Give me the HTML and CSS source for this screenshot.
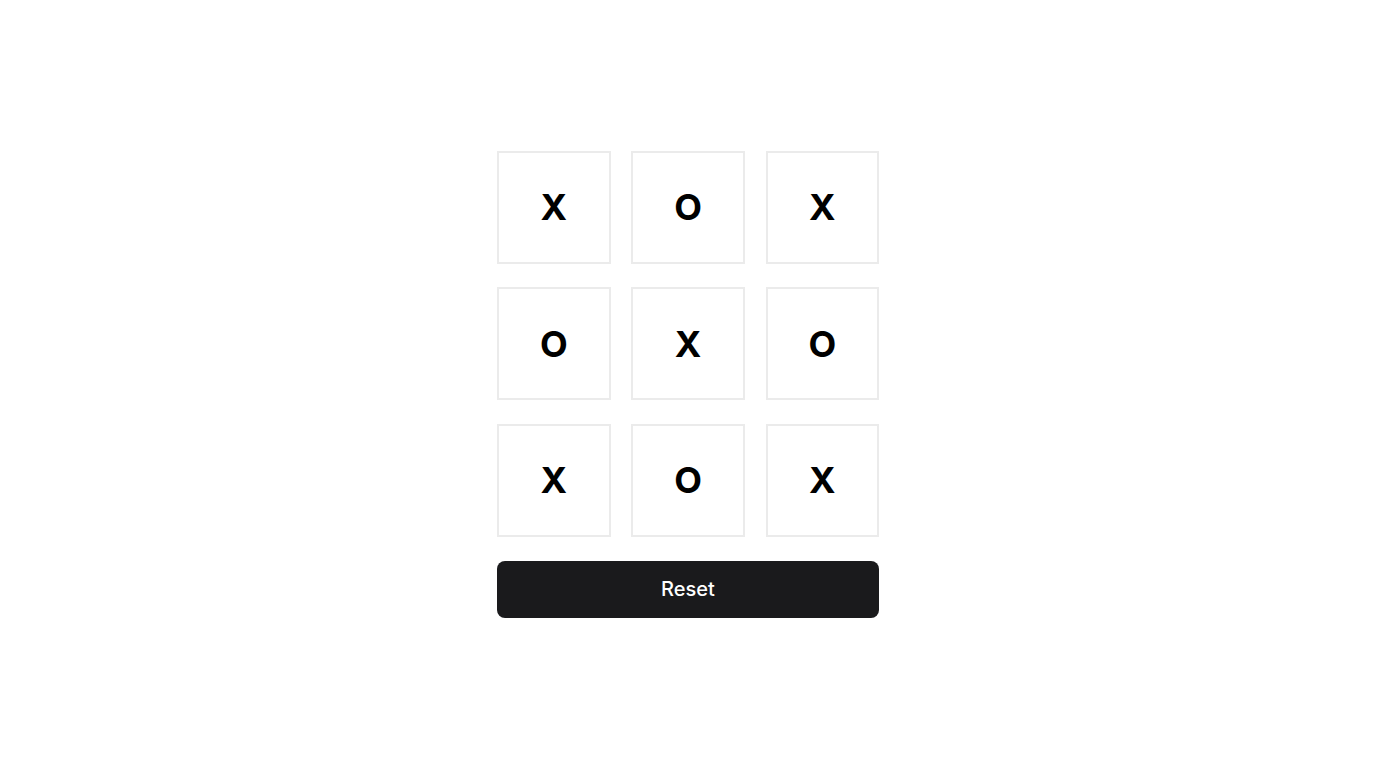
FILE: index.html
```html
<!DOCTYPE html>
<html lang="en">

<head>
  <meta charset="UTF-8">
  <meta name="viewport" content="width=device-width, initial-scale=1.0">
  <title>tic tac toe</title>
  <link rel="stylesheet" href="styles.css">
</head>

<body>
  <div class="container">
    <div class="game">
      <div class="board">
        <div class="cell">X</div>
        <div class="cell">O</div>
        <div class="cell">X</div>
        <div class="cell">O</div>
        <div class="cell">X</div>
        <div class="cell">O</div>
        <div class="cell">X</div>
        <div class="cell">O</div>
        <div class="cell">X</div>
      </div>
      <button type="button" class="resetBtn">Reset</button>
    </div>
  </div>
</body>

</html>
```

FILE: styles.css
```css
* {
  padding: 0;
  margin: 0;
  box-sizing: border-box;
}

body {
  font-family: Inter, "Noto Sans", sans-serif;
  background-color: #ffffff;
}

.container {
  height: 100vh;
  width: 100vw;
  display: flex;
  align-items: center;
  justify-content: center;
}

.game {
  width: 382px;
  display: flex;
  flex-direction: column;
  gap: 24px;
}

.board {
  display: grid;
  grid-template-columns: repeat(3, 113.5px);
  column-gap: 20.75px;
  row-gap: 23.5px;
}

.cell {
  height: 113px;
  border: 2px solid #ebebeb;
  display: flex;
  align-items: center;
  justify-content: center;
  font-size: 36px;
  font-weight: 700;
  color: #000000;
}

.resetBtn {
  height: 57px;
  width: 100%;
  border: none;
  border-radius: 8px;
  background-color: #1a1a1c;
  color: #ffffff;
  font-family: Inter, "Noto Sans", sans-serif;
  font-size: 20px;
  font-weight: 500;
}
```
